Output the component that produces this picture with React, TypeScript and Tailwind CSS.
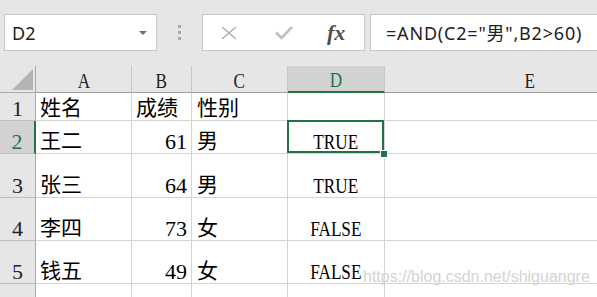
import React from "react";

const serifLatin =
  "inline-block leading-none text-[22px] font-['Liberation_Serif','Noto_Sans_CJK_SC',serif] scale-x-[0.78]";
const serifDigit =
  "inline-block leading-none text-[22px] font-['Liberation_Serif','Noto_Sans_CJK_SC',serif]";
const cjk =
  "inline-block leading-[21px] h-[21px] text-[21px] font-['Noto_Sans_CJK_SC',sans-serif] mb-[3px]";

type Row = {
  n: string;
  a: string;
  b: string;
  bNum: boolean;
  c: string;
  d: string;
};

const rows: Row[] = [
  { n: "1", a: "姓名", b: "成绩", bNum: false, c: "性别", d: "" },
  { n: "2", a: "王二", b: "61", bNum: true, c: "男", d: "TRUE" },
  { n: "3", a: "张三", b: "64", bNum: true, c: "男", d: "TRUE" },
  { n: "4", a: "李四", b: "73", bNum: true, c: "女", d: "FALSE" },
  { n: "5", a: "钱五", b: "49", bNum: true, c: "女", d: "FALSE" },
];

const bodyCell = "bg-white border-r border-b border-[#d4d4d4] flex items-end";

export default function App() {
  return (
    <div className="w-[597px] h-[297px] overflow-hidden bg-[#e6e6e6] relative">
      {/* toolbar */}
      <div className="h-[66px] flex items-start pt-[14px] pl-[4px]">
        <div className="w-[153px] h-[37px] shrink-0 bg-white border border-[#c6c6c6] flex items-center justify-between pl-[7px] pr-[9px]">
          <span className="text-[18px] text-[#222] font-['Noto_Sans',sans-serif] leading-none">D2</span>
          <svg width="8" height="4" viewBox="0 0 8 4">
            <path d="M0 0H8L4 4Z" fill="#6f6f6f" />
          </svg>
        </div>
        <div className="w-[45px] h-[37px] shrink-0 flex flex-col items-center justify-center gap-[3px]">
          <div className="w-[3px] h-[3px] bg-[#a8a8a8]" />
          <div className="w-[3px] h-[3px] bg-[#a8a8a8]" />
          <div className="w-[3px] h-[3px] bg-[#a8a8a8]" />
        </div>
        <div className="w-[163px] h-[37px] shrink-0 bg-white border border-[#c6c6c6] flex items-center pl-[18px]">
          <svg width="16" height="14" viewBox="0 0 16 14">
            <path d="M1 1L15 13M15 1L1 13" stroke="#b0b0b0" strokeWidth="1.6" fill="none" />
          </svg>
          <svg width="18" height="15" viewBox="0 0 18 15" className="ml-[38px]">
            <polyline points="1,7.5 6.5,13 17,2" stroke="#bfbfbf" strokeWidth="2.6" fill="none" />
          </svg>
          <span className="ml-[34px] italic font-bold text-[22px] leading-none text-[#505050] font-['Liberation_Serif',serif]">
            fx
          </span>
        </div>
        <div className="ml-[5px] w-[240px] shrink-0 h-[37px] bg-white border border-[#c6c6c6] flex items-center pl-[15px]">
          <span className="text-[18px] tracking-[0.8px] text-[#222] font-['Noto_Sans','Noto_Sans_CJK_SC',sans-serif] leading-none whitespace-nowrap">
            =AND(C2="男",B2&gt;60)
          </span>
        </div>
      </div>

      {/* sheet */}
      <div className="grid grid-cols-[36px_96px_60px_96px_97px_290px] grid-rows-[27px_28px_33px_44px_43px_43px_20px] w-[675px]">
        {/* header row */}
        <div className="bg-[#e6e6e6] border-r border-b border-[#ababab] flex items-end justify-end pr-[2px] pb-[2px]">
          <svg width="21" height="21" viewBox="0 0 21 21">
            <path d="M21 0V21H0Z" fill="#b4b4b4" />
          </svg>
        </div>
        {["A", "B", "C"].map((l) => (
          <div key={l} className="bg-[#e6e6e6] border-r border-[#c8c8c8] border-b border-b-[#9f9f9f] flex items-end justify-center">
            <span className={serifLatin + " text-[#222]"}>{l}</span>
          </div>
        ))}
        <div className="bg-[#d2d2d2] border-r border-[#c8c8c8] border-b-2 border-b-[#217346] flex items-end justify-center">
          <span className={serifLatin + " text-[#217346]"}>D</span>
        </div>
        <div className="bg-[#e6e6e6] border-b border-[#9f9f9f] flex items-end justify-center">
          <span className={serifLatin + " text-[#222]"}>E</span>
        </div>

        {rows.map((r) => {
          const sel = r.n === "2";
          return (
            <React.Fragment key={r.n}>
              <div
                className={
                  sel
                    ? "bg-[#d2d2d2] border-r-2 border-r-[#217346] border-b border-b-[#bdbdbd] flex items-end justify-center"
                    : "bg-[#e6e6e6] border-r border-r-[#ababab] border-b border-b-[#bdbdbd] flex items-end justify-center"
                }
              >
                <span className={serifDigit + (sel ? " text-[#217346]" : " text-[#222]")}>{r.n}</span>
              </div>
              <div className={bodyCell + " pl-[4px]"}>
                <span className={cjk + " text-black"}>{r.a}</span>
              </div>
              <div className={bodyCell + (r.bNum ? " justify-end pr-[4px]" : " pl-[4px]")}>
                <span className={(r.bNum ? serifDigit : cjk) + " text-black"}>{r.b}</span>
              </div>
              <div className={bodyCell + " pl-[5px]"}>
                <span className={cjk + " text-black"}>{r.c}</span>
              </div>
              <div className={bodyCell + " justify-center relative"}>
                {r.d && <span className={serifLatin + " text-black"}>{r.d}</span>}
                {sel && (
                  <>
                    <div className="absolute -top-[1px] -left-[1px] right-0 bottom-0 border-2 border-[#217346] z-10 pointer-events-none" />
                    <div className="absolute left-[92px] top-[29px] w-[8px] h-[8px] bg-[#217346] border border-white z-20" />
                  </>
                )}
              </div>
              <div className={bodyCell} />
            </React.Fragment>
          );
        })}

        {/* row 6 partial */}
        <div className="bg-[#e6e6e6] border-r border-r-[#ababab]" />
        <div className="bg-white border-r border-[#d4d4d4]" />
        <div className="bg-white border-r border-[#d4d4d4]" />
        <div className="bg-white border-r border-[#d4d4d4]" />
        <div className="bg-white border-r border-[#d4d4d4]" />
        <div className="bg-white" />
      </div>

      {/* watermark */}
      <div className="absolute left-[363px] top-[269px] text-[16px] leading-none text-[#d3d3d3] font-['Liberation_Sans',sans-serif] whitespace-nowrap pointer-events-none">
        https://blog.csdn.net/shiguangre
      </div>
    </div>
  );
}
